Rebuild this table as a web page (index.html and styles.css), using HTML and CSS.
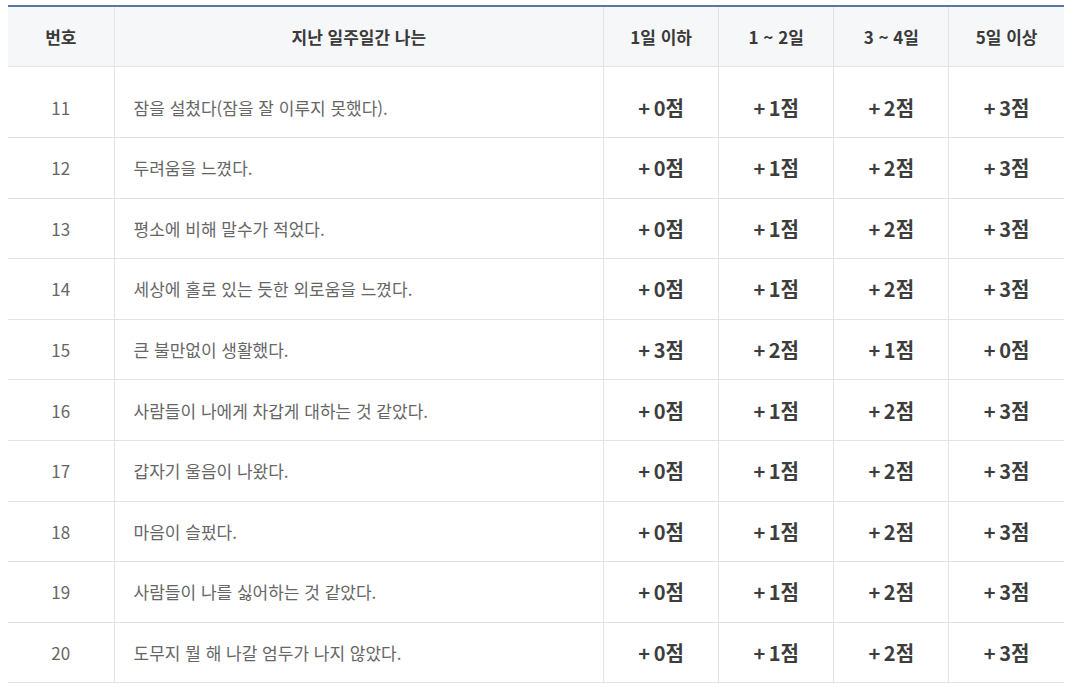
FILE: index.html
```html
<!DOCTYPE html>
<html lang="ko">
<head>
<meta charset="utf-8">
<link rel="stylesheet" href="styles.css">
</head>
<body>
<table class="scale">
  <colgroup>
    <col class="c-no"><col class="c-q"><col class="c-s"><col class="c-s"><col class="c-s"><col class="c-s">
  </colgroup>
  <thead>
    <tr><th>번호</th><th>지난 일주일간 나는</th><th>1일 이하</th><th>1 ~ 2일</th><th>3 ~ 4일</th><th>5일 이상</th></tr>
  </thead>
  <tbody>
    <tr class="first"><td class="no">11</td><td class="q">잠을 설쳤다(잠을 잘 이루지 못했다).</td><td class="s">+ 0점</td><td class="s">+ 1점</td><td class="s">+ 2점</td><td class="s">+ 3점</td></tr>
    <tr><td class="no">12</td><td class="q">두려움을 느꼈다.</td><td class="s">+ 0점</td><td class="s">+ 1점</td><td class="s">+ 2점</td><td class="s">+ 3점</td></tr>
    <tr><td class="no">13</td><td class="q">평소에 비해 말수가 적었다.</td><td class="s">+ 0점</td><td class="s">+ 1점</td><td class="s">+ 2점</td><td class="s">+ 3점</td></tr>
    <tr><td class="no">14</td><td class="q">세상에 홀로 있는 듯한 외로움을 느꼈다.</td><td class="s">+ 0점</td><td class="s">+ 1점</td><td class="s">+ 2점</td><td class="s">+ 3점</td></tr>
    <tr><td class="no">15</td><td class="q">큰 불만없이 생활했다.</td><td class="s">+ 3점</td><td class="s">+ 2점</td><td class="s">+ 1점</td><td class="s">+ 0점</td></tr>
    <tr><td class="no">16</td><td class="q">사람들이 나에게 차갑게 대하는 것 같았다.</td><td class="s">+ 0점</td><td class="s">+ 1점</td><td class="s">+ 2점</td><td class="s">+ 3점</td></tr>
    <tr><td class="no">17</td><td class="q">갑자기 울음이 나왔다.</td><td class="s">+ 0점</td><td class="s">+ 1점</td><td class="s">+ 2점</td><td class="s">+ 3점</td></tr>
    <tr><td class="no">18</td><td class="q">마음이 슬펐다.</td><td class="s">+ 0점</td><td class="s">+ 1점</td><td class="s">+ 2점</td><td class="s">+ 3점</td></tr>
    <tr><td class="no">19</td><td class="q">사람들이 나를 싫어하는 것 같았다.</td><td class="s">+ 0점</td><td class="s">+ 1점</td><td class="s">+ 2점</td><td class="s">+ 3점</td></tr>
    <tr><td class="no">20</td><td class="q">도무지 뭘 해 나갈 엄두가 나지 않았다.</td><td class="s">+ 0점</td><td class="s">+ 1점</td><td class="s">+ 2점</td><td class="s">+ 3점</td></tr>
  </tbody>
</table>
</body>
</html>
```

FILE: styles.css
```css
html, body {
  background: #ffffff;
}
body {
  margin: 5px 0 0 8px;
  font-family: "Noto Sans CJK KR", "Noto Sans", sans-serif;
}
.scale {
  width: 1056px;
  border-collapse: collapse;
  table-layout: fixed;
  border-top: 2px solid #5877a3;
}
.c-no { width: 106px; }
.c-q { width: 489px; }
.c-s { width: 115px; }
.scale th,
.scale td {
  border-bottom: 1px solid #e3e3e3;
  border-left: 1px solid #e3e3e3;
  padding: 0;
  text-align: center;
  vertical-align: middle;
}
.scale th:first-child,
.scale td:first-child {
  border-left: none;
}
.scale th {
  height: 59px;
  background: #f6f7f9;
  font-size: 17px;
  font-weight: 700;
  color: #3a3a3a;
}
.scale td {
  height: 59.6px;
  font-size: 17px;
  color: #666666;
}
.scale tr.first td {
  height: 60px;
  padding-top: 10px;
}
.scale td.q {
  text-align: left;
  padding-left: 19px;
}
.scale td.s {
  font-size: 20px;
  font-weight: 700;
  color: #3d3d3d;
  word-spacing: -2px;
}
```
